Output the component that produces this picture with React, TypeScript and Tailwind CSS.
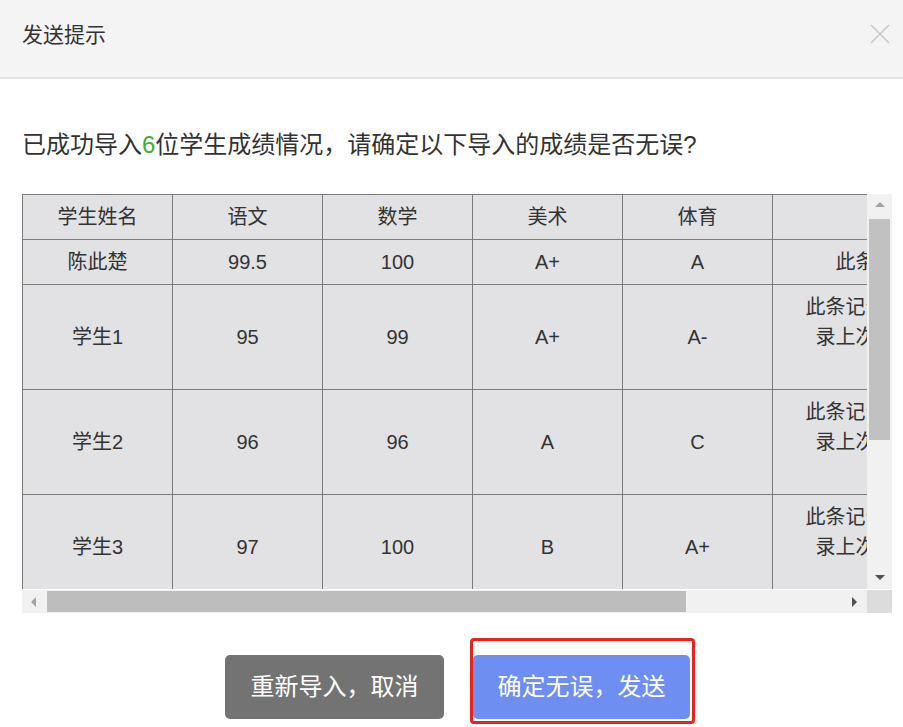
import React from "react";

const students = [
  { name: "陈此楚", chinese: "99.5", math: "100", art: "A+", pe: "A", note: ["此条新"], tall: false },
  { name: "学生1", chinese: "95", math: "99", art: "A+", pe: "A-", note: ["此条记录重复", "录上次成绩", "\u00a0"], tall: true },
  { name: "学生2", chinese: "96", math: "96", art: "A", pe: "C", note: ["此条记录重复", "录上次成绩", "\u00a0"], tall: true },
  { name: "学生3", chinese: "97", math: "100", art: "B", pe: "A+", note: ["此条记录重复", "录上次成绩", "\u00a0"], tall: true },
];

const headers = ["学生姓名", "语文", "数学", "美术", "体育", "备注"];

// Small triangle used for the scrollbar arrows
const Arrow = ({ dir, dark }: { dir: "up" | "down" | "left" | "right"; dark?: boolean }) => {
  const points = {
    up: "0,7 5,2 10,7",
    down: "0,3 5,8 10,3",
    left: "7,0 2,5 7,10",
    right: "3,0 8,5 3,10",
  }[dir];
  return (
    <svg width="10" height="10" viewBox="0 0 10 10">
      <polygon points={points} fill={dark ? "#505050" : "#a3a3a3"} />
    </svg>
  );
};

const App = () => {
  return (
    <div
      className="w-[903px] h-[727px] bg-white text-[#333] overflow-hidden"
      style={{ fontFamily: '"Liberation Sans", "Noto Sans CJK SC", sans-serif' }}
    >
      {/* Header */}
      <div className="h-[79px] bg-[#f5f4f5] border-b-2 border-[#e2e2e2] flex items-start justify-between pl-[22px] pr-[12px] pt-[23px]">
        <span className="text-[21px] leading-[24px]">发送提示</span>
        <svg width="22" height="22" viewBox="0 0 22 22">
          <path d="M2 2 L20 20 M20 2 L2 20" stroke="#c8c8c8" strokeWidth="1.5" />
        </svg>
      </div>

      {/* Body */}
      <div className="px-[22px] pt-[48px]">
        <p className="text-[24px] leading-[36px]">
          已成功导入<span className="text-[#3fae3a]">6</span>位学生成绩情况，请确定以下导入的成绩是否无误?
        </p>

        <div className="mt-[31px] w-[870px]">
          <div className="flex">
            <div className="w-[845px] h-[395px] overflow-hidden">
              <table className="table-fixed border-collapse text-[20px] w-[936px]">
                <colgroup>
                  <col className="w-[150px]" />
                  <col className="w-[150px]" />
                  <col className="w-[150px]" />
                  <col className="w-[150px]" />
                  <col className="w-[150px]" />
                  <col className="w-[186px]" />
                </colgroup>
                <thead>
                  <tr className="h-[45px] bg-[#e2e1e4]">
                    {headers.map((h, i) => (
                      <th key={h} className="border border-[#7b7b7b] font-normal text-center p-0">
                        {i < 5 ? h : ""}
                      </th>
                    ))}
                  </tr>
                </thead>
                <tbody>
                  {students.map((s) => (
                    <tr key={s.name} className={`${s.tall ? "h-[105px]" : "h-[45px]"} bg-[#e2e1e4]`}>
                      <td className="border border-[#7b7b7b] text-center p-0">{s.name}</td>
                      <td className="border border-[#7b7b7b] text-center p-0">{s.chinese}</td>
                      <td className="border border-[#7b7b7b] text-center p-0">{s.math}</td>
                      <td className="border border-[#7b7b7b] text-center p-0">{s.art}</td>
                      <td className="border border-[#7b7b7b] text-center p-0">{s.pe}</td>
                      <td className="border border-[#7b7b7b] text-center p-0 leading-[30px]">
                        {s.note.map((line, i) => (
                          <div key={i}>{line}</div>
                        ))}
                      </td>
                    </tr>
                  ))}
                </tbody>
              </table>
            </div>

            {/* Vertical scrollbar */}
            <div className="w-[25px] h-[395px] bg-[#f1f1f1] flex flex-col items-center">
              <div className="h-[22px] flex items-center justify-center">
                <Arrow dir="up" />
              </div>
              <div className="w-[21px] h-[221px] mt-[3px] bg-[#c1c1c1]" />
              <div className="flex-1" />
              <div className="h-[24px] flex items-center justify-center">
                <Arrow dir="down" dark />
              </div>
            </div>
          </div>

          {/* Horizontal scrollbar */}
          <div className="flex h-[24px] border-t border-white">
            <div className="w-[845px] bg-[#f1f1f1] flex items-center">
              <div className="w-[24px] flex items-center justify-center">
                <Arrow dir="left" />
              </div>
              <div className="w-[639px] h-[21px] ml-[1px] bg-[#bdbdbd]" />
              <div className="flex-1" />
              <div className="w-[26px] flex items-center justify-center">
                <Arrow dir="right" dark />
              </div>
            </div>
            <div className="w-[25px] bg-[#dcdcdc]" />
          </div>
        </div>

        {/* Buttons */}
        <div className="mt-[42px] flex justify-center gap-[29px] pl-[12px]">
          <button className="w-[219px] h-[64px] rounded-[5px] bg-[#737373] text-white text-[24px]">
            重新导入，取消
          </button>
          <div className="relative">
            <button className="w-[217px] h-[64px] rounded-[5px] bg-[#6e8ef2] text-white text-[24px]">
              确定无误，发送
            </button>
            <div className="absolute left-[-3px] right-[-5px] top-[-17px] bottom-[-5px] border-[3px] border-[#e5231f] rounded-[4px] pointer-events-none" />
          </div>
        </div>
      </div>
    </div>
  );
};

export default App;
